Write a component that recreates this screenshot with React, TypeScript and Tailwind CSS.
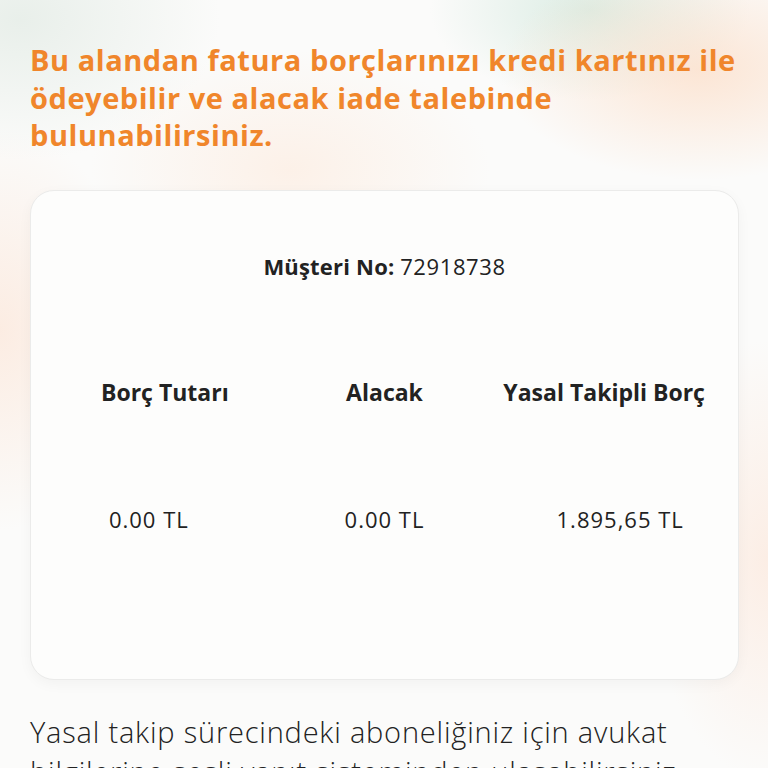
import React from "react";

const headers = ["Borç Tutarı", "Alacak", "Yasal Takipli Borç"];
const values = ["0.00 TL", "0.00 TL", "1.895,65 TL"];

const App = () => {
  return (
    <div className="relative h-[768px] w-[768px] overflow-hidden bg-[#fbfbfa] font-['Open_Sans',sans-serif]">
      {/* soft blurred background blobs */}
      <div className="pointer-events-none absolute inset-0 bg-[radial-gradient(ellipse_200px_110px_at_700px_70px,rgba(252,222,200,0.75),transparent),radial-gradient(ellipse_160px_90px_at_590px_10px,rgba(214,234,224,0.85),transparent),radial-gradient(ellipse_200px_140px_at_20px_20px,rgba(228,236,230,0.8),transparent),radial-gradient(ellipse_140px_200px_at_0px_330px,rgba(252,230,216,0.7),transparent),radial-gradient(ellipse_200px_120px_at_290px_170px,rgba(253,234,220,0.6),transparent),radial-gradient(ellipse_120px_220px_at_768px_560px,rgba(252,232,220,0.7),transparent)]" />

      <div className="relative flex flex-col px-[30px] pt-[41px]">
        <h1 className="whitespace-nowrap text-[29px] font-bold leading-[37.5px] tracking-[0.55px] text-[#f0862b]">
          Bu alandan fatura borçlarınızı kredi kartınız ile
          <br />
          ödeyebilir ve alacak iade talebinde
          <br />
          bulunabilirsiniz.
        </h1>

        <div className="mt-[36px] flex h-[490px] w-[709px] flex-col rounded-[24px] border border-[#ebebea] bg-[#fdfdfc] shadow-[0_4px_14px_rgba(0,0,0,0.04)]">
          <p className="mt-[59px] text-center text-[22px] text-[#222]">
            <span className="font-bold tracking-[0.2px]">Müşteri No:</span>{" "}
            <span className="tracking-[0.6px]">72918738</span>
          </p>

          <div className="mt-[92px] grid grid-cols-3 px-[24px]">
            {headers.map((h) => (
              <div key={h} className="text-center text-[23px] font-bold tracking-[0px] text-[#222]">
                {h}
              </div>
            ))}
          </div>

          <div className="mt-[94px] grid grid-cols-3">
            {values.map((v, i) => (
              <div key={i} className="text-center text-[22px] tracking-[1px] text-[#222]">
                {v}
              </div>
            ))}
          </div>
        </div>

        <p className="mt-[32px] whitespace-nowrap text-[29px] font-light leading-[40px] tracking-[0.8px] text-[#222]">
          Yasal takip sürecindeki aboneliğiniz için avukat
          <br />
          bilgilerine sesli yanıt sisteminden ulaşabilirsiniz.
        </p>
      </div>
    </div>
  );
};

export default App;
